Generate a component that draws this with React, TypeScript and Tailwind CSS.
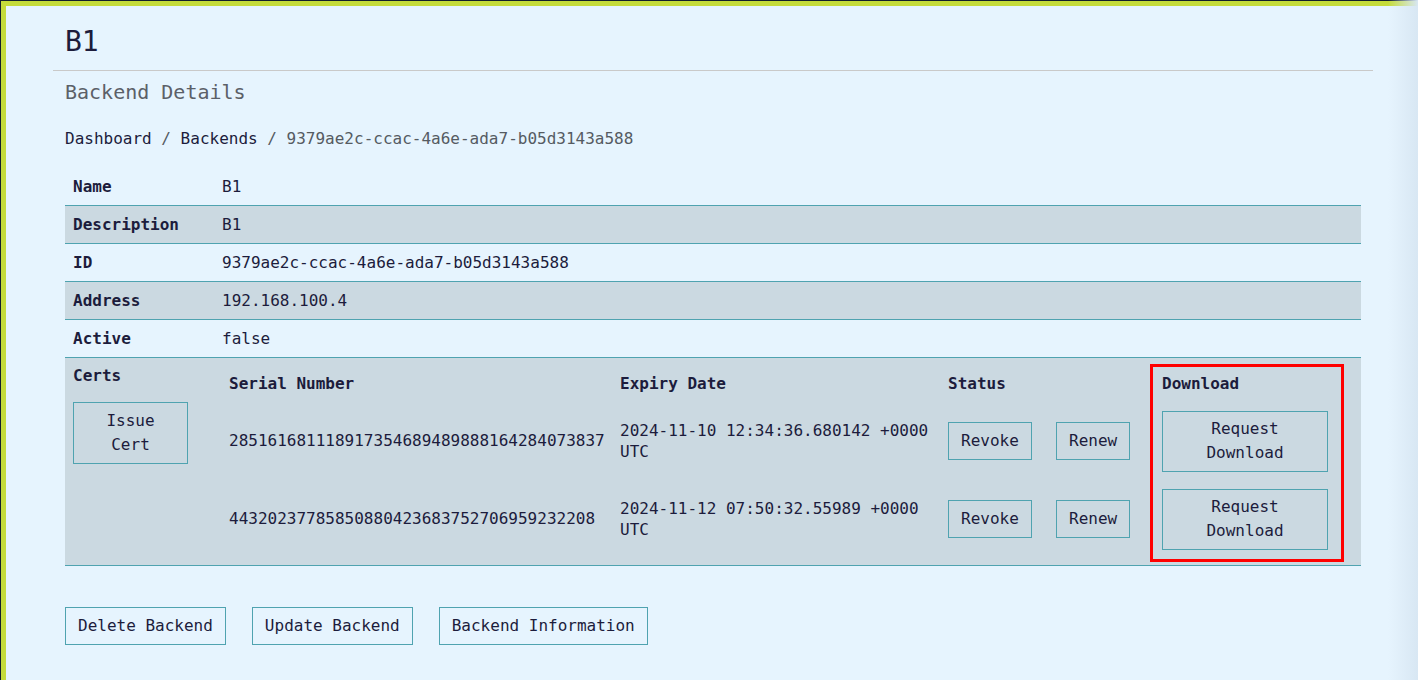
import clsx from 'clsx';

const details: [string, string][] = [
  ['Name', 'B1'],
  ['Description', 'B1'],
  ['ID', '9379ae2c-ccac-4a6e-ada7-b05d3143a588'],
  ['Address', '192.168.100.4'],
  ['Active', 'false'],
];

const certs = [
  {
    serial: '285161681118917354689489888164284073837',
    expiry: '2024-11-10 12:34:36.680142 +0000 UTC',
  },
  {
    serial: '44320237785850880423683752706959232208',
    expiry: '2024-11-12 07:50:32.55989 +0000 UTC',
  },
];

const btn = 'border border-[#4fa3b0] bg-transparent text-[#1c1c3c] leading-6';

const App = () => {
  return (
    <div className="relative min-h-[680px] bg-[#15202b] pt-px pl-px font-['DejaVu_Sans_Mono',monospace] text-[16px] text-[#1c1c3c]">
      <div className="min-h-[679px] border-t-[5px] border-l-[5px] border-[#c5dc3a] bg-[#e6f4fe] pb-10">
        <div className="ml-[47px] w-[1320px]">
          {/* Header */}
          <h1 className="px-3 pt-[18px] text-[28px] leading-9">B1</h1>
          <div className="mt-[10px] h-px bg-[#c9c9c9]" />

          <div className="px-3">
            <h2 className="mt-[7px] text-[20px] leading-7 text-[#5b6068]">Backend Details</h2>

            {/* Breadcrumb */}
            <nav className="mt-[21px] leading-6">
              <span>Dashboard</span>
              <span className="text-[#555b62]"> / </span>
              <span>Backends</span>
              <span className="text-[#555b62]"> / 9379ae2c-ccac-4a6e-ada7-b05d3143a588</span>
            </nav>

            {/* Details table */}
            <div className="mt-[17px]">
              {details.map(([label, value], i) => (
                <div
                  key={label}
                  className={clsx(
                    'flex h-[38px] items-center border-b border-[#4fa3b0]',
                    i % 2 === 1 && 'bg-[#cbd9e1]'
                  )}
                >
                  <div className="w-[149px] shrink-0 px-2 font-bold">{label}</div>
                  <div className="px-2">{value}</div>
                </div>
              ))}

              {/* Certs row */}
              <div className="flex border-b border-[#4fa3b0] bg-[#cbd9e1]">
                <div className="w-[149px] shrink-0 px-2 pt-1.5">
                  <div className="leading-6 font-bold">Certs</div>
                  <button className={clsx(btn, 'mt-[14px] w-[115px] px-3 py-1.5 text-center')}>
                    Issue Cert
                  </button>
                </div>

                <div className="relative px-2 py-[7px]">
                  <div className="grid grid-cols-[391px_328px_108px_106px_198px]">
                    <div className="flex h-[37px] items-center px-[7px] font-bold">Serial Number</div>
                    <div className="flex h-[37px] items-center px-[7px] font-bold">Expiry Date</div>
                    <div className="col-span-2 flex h-[37px] items-center px-[7px] font-bold">Status</div>
                    <div className="flex h-[37px] items-center px-[7px] font-bold">Download</div>

                    {certs.map((c) => (
                      <div key={c.serial} className="contents">
                        <div className="flex h-[78px] items-center px-[7px]">{c.serial}</div>
                        <div className="flex h-[78px] items-center px-[7px] leading-[21px]">{c.expiry}</div>
                        <div className="flex h-[78px] items-center px-[7px]">
                          <button className={clsx(btn, 'h-[38px] px-3')}>Revoke</button>
                        </div>
                        <div className="flex h-[78px] items-center px-[7px]">
                          <button className={clsx(btn, 'h-[38px] px-3')}>Renew</button>
                        </div>
                        <div className="flex h-[78px] items-center px-[7px]">
                          <button className={clsx(btn, 'h-[61px] w-[166px] px-3 text-center')}>
                            Request Download
                          </button>
                        </div>
                      </div>
                    ))}
                  </div>

                  {/* highlight box */}
                  <div className="pointer-events-none absolute top-[6px] left-[936px] h-[198px] w-[194px] border-[3px] border-[#ff0000]" />
                </div>
              </div>
            </div>

            {/* Actions */}
            <div className="mt-[41px] flex gap-[26px]">
              <button className={clsx(btn, 'h-[38px] px-3')}>Delete Backend</button>
              <button className={clsx(btn, 'h-[38px] px-3')}>Update Backend</button>
              <button className={clsx(btn, 'h-[38px] px-3')}>Backend Information</button>
            </div>
          </div>
        </div>
      </div>

      <div className="pointer-events-none absolute inset-y-0 right-0 w-[30px] bg-linear-to-r from-transparent to-[#d8e7f3]" />
    </div>
  );
};

export default App;
